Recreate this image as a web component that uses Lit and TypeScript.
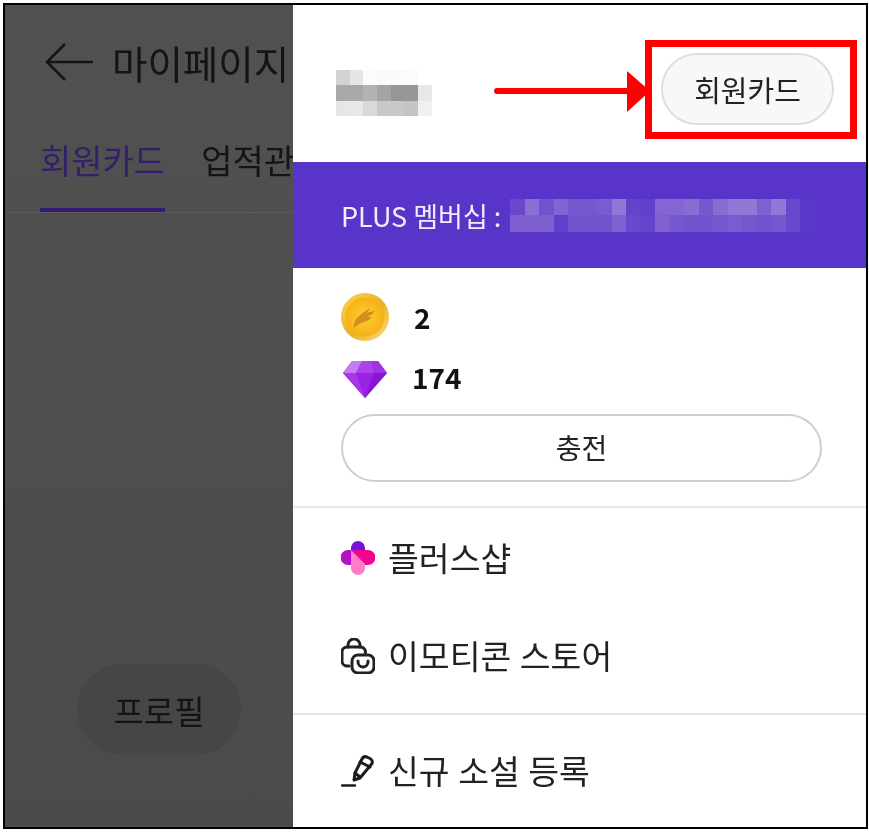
import { LitElement, html, css, svg } from "lit";
import { customElement } from "lit/decorators.js";

const nameCells = [
  ["#d2d2d2", "#e6e6e6", "#fbfbfb", "#fafafa", "#fafafa", "#fbfbfb", "#fff"],
  ["#a9a9a9", "#a9a9a9", "#b2b2b2", "#a4a4a4", "#969696", "#979797", "#e8e8e8"],
  ["#e6e6e6", "#e8e8e8", "#d9d9d9", "#c8c8c8", "#c8c8c8", "#c4c4c4", "#f0f0f0"],
];
const memberCells = [
  ["#6a47cc", "#8a6fd4", "#7153cd", "#8264d2", "#7658ce", "#7658ce", "#7a5cd0", "#9278d6", "#6444ca", "#6040ca", "#8466d2", "#8466d2", "#8a6dd3", "#7658ce", "#8a6dd3", "#9078d6", "#9078d6", "#7e60d0", "#9078d6", "#6848cc", "#5c3ac9"],
  ["#7e5fd0", "#7e5fd0", "#7e5fd0", "#6040ca", "#7053cd", "#7053cd", "#7053cd", "#7e60d0", "#6848cc", "#6444ca", "#8060d0", "#7658ce", "#7053cd", "#7053cd", "#7658ce", "#7a5cd0", "#7658ce", "#7053cd", "#7658ce", "#6848cc", "#5c3ac9"],
];

const coinIcon = svg`<svg class="coin" viewBox="0 0 48 48" aria-hidden="true">
  <defs>
    <radialGradient id="coinFace" cx="50%" cy="50%" r="55%"><stop offset="0" stop-color="#fcd035"/><stop offset="1" stop-color="#f4ae12"/></radialGradient>
    <linearGradient id="coinRim" x1="0" y1="0" x2="1" y2="1"><stop offset="0" stop-color="#f9d558"/><stop offset=".55" stop-color="#ecb01f"/><stop offset="1" stop-color="#fae08c"/></linearGradient>
  </defs>
  <circle cx="24" cy="24" r="24" fill="url(#coinRim)"/>
  <circle cx="24" cy="24" r="19.5" fill="url(#coinFace)"/>
  <path d="M13 35c0-5 1-9 5-12 3-3 7-5 11-8-1 2-2 4-4 5 3-1 6-2 9-2-2 3-5 5-8 6 2 0 4 0 5 0-3 4-8 5-11 6-3 1-5 3-7 5z" fill="#d68c18"/>
</svg>`;

const gemIcon = svg`<svg class="gem" viewBox="0 0 44 38" aria-hidden="true">
  <polygon points="9,1 35,1 44,13 22,38 0,13" fill="#9726de"/>
  <polygon points="9,1 19,1 13,13 0,13" fill="#c47cee"/>
  <polygon points="19,1 29,1 31,13 13,13" fill="#aa44e8"/>
  <polygon points="29,1 35,1 44,13 31,13" fill="#a033e4"/>
  <polygon points="0,13 13,13 22,38" fill="#a636e6"/>
  <polygon points="13,13 31,13 22,38" fill="#9a22e2"/>
  <polygon points="31,13 44,13 22,38" fill="#8517d2"/>
</svg>`;

const shopIcon = svg`<svg class="ico" viewBox="0 0 34 34" aria-hidden="true">
  <path d="M10 11V7a7 7 0 0 1 14 0v5H10z" fill="#7a10d8"/>
  <path d="M7 9h13v15H7a7.500 7.500 0 0 1 0-15z" fill="#b90fc4"/>
  <path d="M15 9h12a7.500 7.500 0 0 1 0 15H15z" fill="#f0068e"/>
  <path d="M10 9 24 23v4a7 7 0 0 1-14 0z" fill="#ff7cc6"/>
</svg>`;

const storeIcon = svg`<svg class="ico store" viewBox="0 0 34 36" fill="none" stroke="#222" stroke-width="3" stroke-linecap="round" stroke-linejoin="round" aria-hidden="true">
  <path d="M8 28H6a5 5 0 0 1-5-5V14a5 5 0 0 1 5-5H20a5 5 0 0 1 4 7"/>
  <path d="M7 9V7a6 6 0 0 1 12 0v2"/>
  <rect x="11" y="17" width="22" height="18" rx="6"/>
  <path d="M17 23v1a5 5 0 0 0 10 0v-1"/>
</svg>`;

const pencilIcon = svg`<svg class="ico" viewBox="0 0 34 34" fill="none" stroke="#1c1c1c" stroke-width="3" stroke-linecap="round" stroke-linejoin="round" aria-hidden="true">
  <path d="M1 31.5h13" stroke-width="2.4"/>
  <path d="M13 26 14 19 21 5c1-2 3-2.8 5-2l3 1.5c2 1 2.8 3.200 2 5L19 24z"/>
  <path d="M19 8 29 13"/>
  <path d="M14 19l5 4"/>
</svg>`;

@customElement("app-root")
export class AppRoot extends LitElement {
  static styles = css`
    :host {
      display: block;
      width: 869px;
      height: 833px;
      background: #fff;
      font-family: "Noto Sans CJK KR", "Noto Sans", sans-serif;
      color: #222;
      overflow: hidden;
    }
    .frame {
      position: relative;
      box-sizing: border-box;
      width: 865px;
      height: 826px;
      margin: 3px 0 0 3px;
      border: 2px solid #000;
      display: grid;
      grid-template-columns: 288px 1fr;
      overflow: hidden;
      filter: blur(0.5px);
    }
    .back {
      background: linear-gradient(#515151, #4b4b4b);
      overflow: hidden;
      display: flex;
      flex-direction: column;
      color: #141414;
      white-space: nowrap;
    }
    .topbar {
      display: flex;
      align-items: center;
      gap: 17px;
      height: 114px;
      padding-left: 40px;
      font-size: 38.5px;
      line-height: 1;
    }
    .arrow-back { width: 50px; height: 40px; flex: none; }
    .tabs {
      display: flex;
      gap: 36px;
      padding-left: 35px;
      height: 93px;
      border-bottom: 1px solid #5b5b5b;
      font-size: 34px;
      line-height: 82px;
    }
    .tab.on {
      color: #34206a;
      height: 93px;
      box-sizing: border-box;
      border-bottom: 4px solid #341a70;
    }
    .profile-wrap { padding: 451px 0 0 72px; }
    .profile {
      width: 164px;
      height: 91px;
      border-radius: 46px;
      background: #464646;
      display: flex;
      align-items: center;
      justify-content: center;
      font-size: 33px;
    }
    .drawer { background: #fff; display: flex; flex-direction: column; overflow: hidden; }
    .head {
      height: 157px;
      flex: none;
      box-sizing: border-box;
      padding: 48px 32px 0 43px;
      display: flex;
      justify-content: space-between;
      align-items: flex-start;
    }
    .pix { display: grid; }
    .pix span { display: block; }
    .name { margin-top: 17px; grid-template-columns: repeat(7, 13.7px); grid-auto-rows: 15.3px; }
    .card {
      box-sizing: border-box;
      width: 173px;
      height: 72px;
      border: 2px solid #dedede;
      border-radius: 36px;
      background: #f8f8f8;
      display: flex;
      align-items: center;
      justify-content: center;
      font-size: 29px;
      color: #222;
    }
    .band {
      height: 106px;
      flex: none;
      background: #5835c8;
      display: flex;
      align-items: center;
      padding-left: 48px;
      color: #f1eefb;
      font-size: 27px;
      white-space: nowrap;
    }
    .band b { font-weight: 400; width: 169px; flex: none; }
    .member { grid-template-columns: repeat(21, 14.5px); grid-auto-rows: 16.5px; }
    .wallet {
      padding: 25px 44px 24px 48px;
      display: flex;
      flex-direction: column;
      border-bottom: 2px solid #e8e8e8;
    }
    .amount {
      height: 48px;
      display: flex;
      align-items: center;
      font-size: 28px;
      color: #111;
    }
    .amount + .amount { margin-top: 14px; }
    .amount b { font-weight: 700; }
    .amount + .amount b { margin-bottom: 4px; }
    .amount i { flex: none; width: 73px; display: flex; font-style: normal; }
    .amount + .amount i { width: 71px; padding-left: 2px; box-sizing: border-box; }
    .coin { width: 48px; height: 48px; }
    .gem { width: 44px; height: 38px; }
    .charge {
      margin-top: 11px;
      box-sizing: border-box;
      height: 68px;
      border: 2px solid #cfcfcf;
      border-radius: 34px;
      display: flex;
      align-items: center;
      justify-content: center;
      font-size: 28px;
      padding-bottom: 2px;
    }
    .menu { display: flex; flex-direction: column; padding: 1px 0 8px 48px; border-bottom: 2px solid #e4e4e4; }
    .menu.last { border-bottom: 0; padding-top: 7px; }
    .item {
      height: 98px;
      box-sizing: border-box;
      padding-bottom: 3px;
      display: flex;
      align-items: center;
      font-size: 33.5px;
      word-spacing: 1px;
      color: #222;
    }
    .item span { flex: none; width: 47px; display: flex; margin-top: 2px; }
    .ico { width: 34px; height: 34px; }
    .ico.store { height: 36px; }
    .mark {
      position: absolute;
      left: 640px;
      top: 35px;
      width: 212px;
      height: 99px;
      box-sizing: border-box;
      border: 7px solid #f00;
    }
    .pointer {
      position: absolute;
      left: 489px;
      top: 63px;
      width: 160px;
      height: 50px;
    }
  `;

  private pix(cls: string, rows: string[][]) {
    return html`<div class="pix ${cls}">
      ${rows.flat().map((c) => html`<span style="background:${c}"></span>`)}
    </div>`;
  }

  render() {
    return html`<div class="frame">
      <section class="back">
        <div class="topbar">
          <svg class="arrow-back" viewBox="0 0 50 40" fill="none" stroke="#141414" stroke-width="2.6" aria-hidden="true">
            <path d="M48 20H2M20 2 2 20l18 18"/>
          </svg>
          <span>마이페이지</span>
        </div>
        <div class="tabs"><div class="tab on">회원카드</div><div class="tab">업적관</div></div>
        <div class="profile-wrap"><div class="profile">프로필</div></div>
      </section>
      <section class="drawer">
        <div class="head">
          ${this.pix("name", nameCells)}
          <div class="card">회원카드</div>
        </div>
        <div class="band"><b>PLUS 멤버십 :</b>${this.pix("member", memberCells)}</div>
        <div class="wallet">
          <div class="amount"><i>${coinIcon}</i><b>2</b></div>
          <div class="amount"><i>${gemIcon}</i><b>174</b></div>
          <div class="charge">충전</div>
        </div>
        <div class="menu">
          <div class="item"><span>${shopIcon}</span>플러스샵</div>
          <div class="item"><span>${storeIcon}</span>이모티콘 스토어</div>
        </div>
        <div class="menu last">
          <div class="item"><span>${pencilIcon}</span>신규 소설 등록</div>
        </div>
      </section>
      <div class="mark"></div>
      <svg class="pointer" viewBox="0 0 160 50" aria-hidden="true">
        <path d="M3 23H136" stroke="#f00" stroke-width="6" stroke-linecap="round"/>
        <polygon points="133,3 156,23 133,44" fill="#f00"/>
      </svg>
    </div>`;
  }
}
